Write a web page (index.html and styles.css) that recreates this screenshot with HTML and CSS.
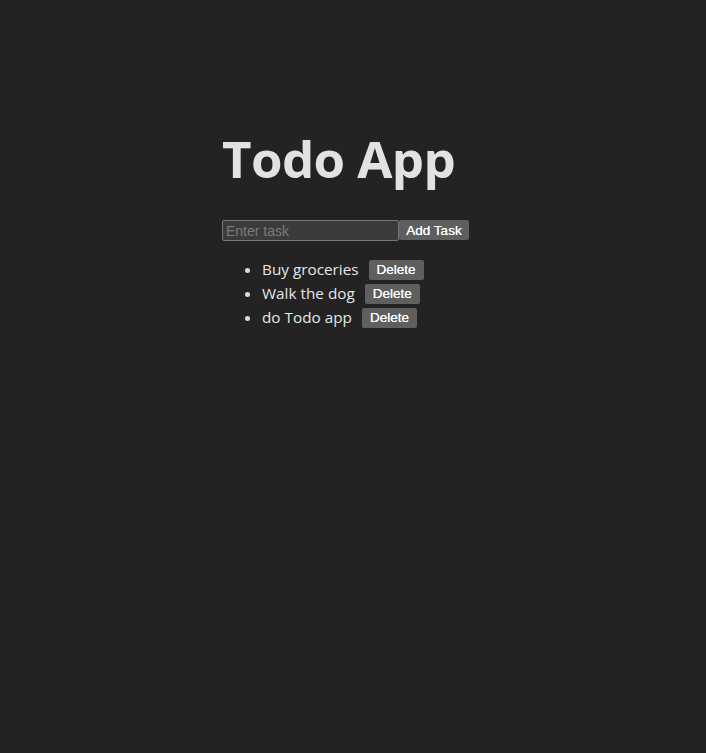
FILE: index.html
```html
<!DOCTYPE html>
<html lang="en">
<head>
<meta charset="utf-8">
<title>Todo App</title>
<link rel="stylesheet" href="styles.css">
</head>
<body>
<div class="app">
  <h1 class="title">Todo App</h1>
  <div class="form">
    <input class="task-input" type="text" placeholder="Enter task">
    <button class="btn add-btn">Add Task</button>
  </div>
  <ul class="tasks">
    <li class="task"><span class="task-text">Buy groceries</span><button class="btn del-btn">Delete</button></li>
    <li class="task"><span class="task-text">Walk the dog</span><button class="btn del-btn">Delete</button></li>
    <li class="task"><span class="task-text">do Todo app</span><button class="btn del-btn">Delete</button></li>
  </ul>
</div>
</body>
</html>
```
FILE: styles.css
```css
html, body {
  margin: 0;
  padding: 0;
  background: #232323;
  height: 100%;
}
body {
  font-family: "Open Sans", "Noto Sans", sans-serif;
  color: #e4e4e4;
}
.app {
  width: 262px;
  margin: 0 auto;
  padding-top: 124px;
}
.title {
  margin: 0 0 28px 0;
  font-size: 51px;
  line-height: 68px;
  font-weight: 700;
  color: #e2e2e2;
  letter-spacing: -0.6px;
}
.form {
  display: flex;
  align-items: flex-start;
  height: 21px;
}
.task-input {
  box-sizing: border-box;
  width: 177px;
  height: 21px;
  margin: 0;
  padding: 1px 3px;
  background: #3b3b3b;
  border: 1px solid #767676;
  border-radius: 2px;
  color: #e0e0e0;
  font-family: "Liberation Sans", Arial, sans-serif;
  font-size: 14px;
}
.task-input::placeholder {
  color: #7a7a7a;
}
.btn {
  box-sizing: border-box;
  border: none;
  border-radius: 2px;
  background: #5f5f5f;
  color: #ffffff;
  font-family: "Liberation Sans", Arial, sans-serif;
  font-size: 13.5px;
  font-weight: 400;
  white-space: nowrap;
  padding: 0 8px;
  margin: 0;
  cursor: pointer;
  text-shadow: 0 0 0.5px #ffffff;
}
.add-btn {
  height: 20px;
  width: 70px;
  padding: 0;
}
.tasks {
  margin: 16px 0 0 0;
  padding-left: 40px;
  font-size: 15.3px;
}
.task {
  line-height: 24px;
  height: 24px;
}
.task::marker {
  color: #dedede;
}
.task-text {
  color: #e6e6e6;
}
.del-btn {
  height: 20px;
  margin-left: 10px;
  vertical-align: 1px;
}
```
